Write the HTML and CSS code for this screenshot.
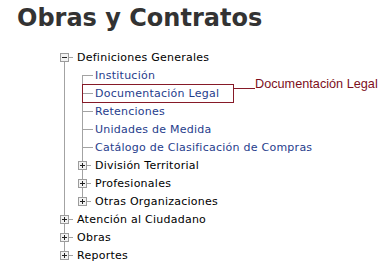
FILE: index.html
```html
<html>

<head>
  <title>Obras y Contratos</title>
  <link rel="stylesheet" href="styles.css">
</head>

<body>
  <h1 class="title">Obras y Contratos</h1>

  <ul class="tree">
    <li>
      <div class="row">
        <svg class="exp" width="9" height="9"><rect x=".5" y=".5" width="8" height="8" fill="#f2f2f2" stroke="#9c9c9c"/><path d="M2 4.5h5" stroke="#222"/></svg>
        <span class="dash"></span><span class="label">Definiciones Generales</span>
      </div>
      <ul class="tree sub">
        <li><div class="row"><span class="stub"></span><a class="link">Institución</a></div></li>
        <li>
          <div class="row mark">
            <span class="note-box"><span class="stub"></span><a class="link">Documentación Legal</a></span>
            <span class="callout"><span class="callout-line"></span><span class="callout-text">Documentación Legal</span></span>
          </div>
        </li>
        <li><div class="row"><span class="stub"></span><a class="link">Retenciones</a></div></li>
        <li><div class="row"><span class="stub"></span><a class="link">Unidades de Medida</a></div></li>
        <li><div class="row"><span class="stub"></span><a class="link">Catálogo de Clasificación de Compras</a></div></li>
        <li>
          <div class="row">
            <svg class="exp" width="9" height="9"><rect x=".5" y=".5" width="8" height="8" fill="#f2f2f2" stroke="#9c9c9c"/><path d="M2 4.5h5M4.5 2v5" stroke="#222"/></svg>
            <span class="dash"></span><span class="label">División Territorial</span>
          </div>
        </li>
        <li>
          <div class="row">
            <svg class="exp" width="9" height="9"><rect x=".5" y=".5" width="8" height="8" fill="#f2f2f2" stroke="#9c9c9c"/><path d="M2 4.5h5M4.5 2v5" stroke="#222"/></svg>
            <span class="dash"></span><span class="label">Profesionales</span>
          </div>
        </li>
        <li>
          <div class="row">
            <svg class="exp" width="9" height="9"><rect x=".5" y=".5" width="8" height="8" fill="#f2f2f2" stroke="#9c9c9c"/><path d="M2 4.5h5M4.5 2v5" stroke="#222"/></svg>
            <span class="dash"></span><span class="label">Otras Organizaciones</span>
          </div>
        </li>
      </ul>
    </li>
    <li>
      <div class="row">
        <svg class="exp" width="9" height="9"><rect x=".5" y=".5" width="8" height="8" fill="#f2f2f2" stroke="#9c9c9c"/><path d="M2 4.5h5M4.5 2v5" stroke="#222"/></svg>
        <span class="dash"></span><span class="label">Atención al Ciudadano</span>
      </div>
    </li>
    <li>
      <div class="row">
        <svg class="exp" width="9" height="9"><rect x=".5" y=".5" width="8" height="8" fill="#f2f2f2" stroke="#9c9c9c"/><path d="M2 4.5h5M4.5 2v5" stroke="#222"/></svg>
        <span class="dash"></span><span class="label">Obras</span>
      </div>
    </li>
    <li>
      <div class="row">
        <svg class="exp" width="9" height="9"><rect x=".5" y=".5" width="8" height="8" fill="#f2f2f2" stroke="#9c9c9c"/><path d="M2 4.5h5M4.5 2v5" stroke="#222"/></svg>
        <span class="dash"></span><span class="label">Reportes</span>
      </div>
    </li>
  </ul>
</body>

</html>
```

FILE: styles.css
```css
body {
  margin: 0;
  background: #fff;
  font-family: "DejaVu Sans", sans-serif;
}

.title {
  margin: 4px 0 16px 17px;
  font-size: 24px;
  line-height: 28px;
  font-weight: bold;
  color: #333;
}

/* tree lists, vertical guide line drawn as a background */
.tree {
  list-style: none;
  margin: 0 0 0 60px;
  padding: 0;
  background: linear-gradient(#a3a3a3, #a3a3a3) no-repeat 4px 9px / 1px calc(100% - 18px);
}

.tree.sub {
  margin-left: 18px;
}

.row {
  position: relative;
  display: flex;
  align-items: center;
  height: 18px;
  font-size: 11px;
  letter-spacing: 0.25px;
  white-space: nowrap;
}

.exp {
  display: block;
  flex: none;
}

.dash {
  width: 4px;
  height: 1px;
  background: #a3a3a3;
  margin-right: 4px;
}

.label {
  color: #000;
}

.stub {
  width: 11px;
  height: 1px;
  margin-left: 4px;
  margin-right: 2px;
  background: #a3a3a3;
}

.link {
  color: #1f3d8c;
  text-decoration: none;
}

.note-box {
  display: flex;
  align-items: center;
  box-sizing: border-box;
  width: 152px;
  height: 19px;
  margin-left: 4px;
  border: 1px solid #861a28;
}

.note-box .stub {
  width: 10px;
  margin-left: 0;
}

.callout {
  position: absolute;
  left: 155px;
  top: -6px;
  display: flex;
  align-items: flex-end;
}

.callout-line {
  width: 22px;
  height: 1px;
  margin-bottom: 2px;
  background: #861a28;
}

.callout-text {
  font-family: "Liberation Sans", Arial, sans-serif;
  font-size: 12.7px;
  line-height: 13px;
  letter-spacing: 0;
  color: #7d0f1c;
}
```
